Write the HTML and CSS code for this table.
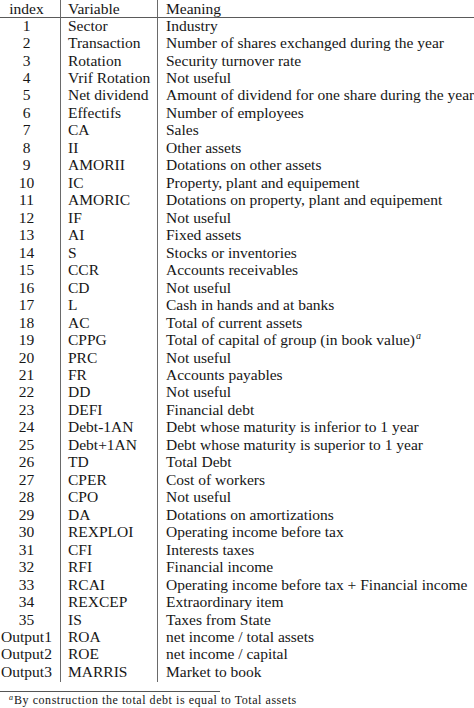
FILE: index.html
```html
<!DOCTYPE html>
<html>
<head>
<meta charset="utf-8">
<link rel="stylesheet" href="styles.css">
</head>
<body>
<div class="page">
<table class="vars">
<thead>
<tr><th class="c1">index</th><th class="c2">Variable</th><th class="c3">Meaning</th></tr>
</thead>
<tbody>
<tr><td class="c1">1</td><td class="c2">Sector</td><td class="c3">Industry</td></tr>
<tr><td class="c1">2</td><td class="c2">Transaction</td><td class="c3">Number of shares exchanged during the year</td></tr>
<tr><td class="c1">3</td><td class="c2">Rotation</td><td class="c3">Security turnover rate</td></tr>
<tr><td class="c1">4</td><td class="c2">Vrif Rotation</td><td class="c3">Not useful</td></tr>
<tr><td class="c1">5</td><td class="c2">Net dividend</td><td class="c3">Amount of dividend for one share during the year</td></tr>
<tr><td class="c1">6</td><td class="c2">Effectifs</td><td class="c3">Number of employees</td></tr>
<tr><td class="c1">7</td><td class="c2">CA</td><td class="c3">Sales</td></tr>
<tr><td class="c1">8</td><td class="c2">II</td><td class="c3">Other assets</td></tr>
<tr><td class="c1">9</td><td class="c2">AMORII</td><td class="c3">Dotations on other assets</td></tr>
<tr><td class="c1">10</td><td class="c2">IC</td><td class="c3">Property, plant and equipement</td></tr>
<tr><td class="c1">11</td><td class="c2">AMORIC</td><td class="c3">Dotations on property, plant and equipement</td></tr>
<tr><td class="c1">12</td><td class="c2">IF</td><td class="c3">Not useful</td></tr>
<tr><td class="c1">13</td><td class="c2">AI</td><td class="c3">Fixed assets</td></tr>
<tr><td class="c1">14</td><td class="c2">S</td><td class="c3">Stocks or inventories</td></tr>
<tr><td class="c1">15</td><td class="c2">CCR</td><td class="c3">Accounts receivables</td></tr>
<tr><td class="c1">16</td><td class="c2">CD</td><td class="c3">Not useful</td></tr>
<tr><td class="c1">17</td><td class="c2">L</td><td class="c3">Cash in hands and at banks</td></tr>
<tr><td class="c1">18</td><td class="c2">AC</td><td class="c3">Total of current assets</td></tr>
<tr><td class="c1">19</td><td class="c2">CPPG</td><td class="c3">Total of capital of group (in book value)<sup class="fn">a</sup></td></tr>
<tr><td class="c1">20</td><td class="c2">PRC</td><td class="c3">Not useful</td></tr>
<tr><td class="c1">21</td><td class="c2">FR</td><td class="c3">Accounts payables</td></tr>
<tr><td class="c1">22</td><td class="c2">DD</td><td class="c3">Not useful</td></tr>
<tr><td class="c1">23</td><td class="c2">DEFI</td><td class="c3">Financial debt</td></tr>
<tr><td class="c1">24</td><td class="c2">Debt-1AN</td><td class="c3">Debt whose maturity is inferior to 1 year</td></tr>
<tr><td class="c1">25</td><td class="c2">Debt+1AN</td><td class="c3">Debt whose maturity is superior to 1 year</td></tr>
<tr><td class="c1">26</td><td class="c2">TD</td><td class="c3">Total Debt</td></tr>
<tr><td class="c1">27</td><td class="c2">CPER</td><td class="c3">Cost of workers</td></tr>
<tr><td class="c1">28</td><td class="c2">CPO</td><td class="c3">Not useful</td></tr>
<tr><td class="c1">29</td><td class="c2">DA</td><td class="c3">Dotations on amortizations</td></tr>
<tr><td class="c1">30</td><td class="c2">REXPLOI</td><td class="c3">Operating income before tax</td></tr>
<tr><td class="c1">31</td><td class="c2">CFI</td><td class="c3">Interests taxes</td></tr>
<tr><td class="c1">32</td><td class="c2">RFI</td><td class="c3">Financial income</td></tr>
<tr><td class="c1">33</td><td class="c2">RCAI</td><td class="c3">Operating income before tax + Financial income</td></tr>
<tr><td class="c1">34</td><td class="c2">REXCEP</td><td class="c3">Extraordinary item</td></tr>
<tr><td class="c1">35</td><td class="c2">IS</td><td class="c3">Taxes from State</td></tr>
<tr><td class="c1">Output1</td><td class="c2">ROA</td><td class="c3">net income / total assets</td></tr>
<tr><td class="c1">Output2</td><td class="c2">ROE</td><td class="c3">net income / capital</td></tr>
<tr class="last"><td class="c1">Output3</td><td class="c2">MARRIS</td><td class="c3">Market to book</td></tr>
</tbody>
</table>
<div class="footnote">
<div class="fn-rule"></div>
<p class="fn-text"><sup class="fn-mark">a</sup>By construction the total debt is equal to Total assets</p>
</div>
</div>
</body>
</html>
```
FILE: styles.css
```css
html, body {
  margin: 0;
  padding: 0;
  background: #ffffff;
}
body {
  font-family: "Liberation Serif", "Times New Roman", serif;
  color: #161616;
  overflow: hidden;
}
.page {
  width: 474px;
  height: 708px;
  overflow: hidden;
}
.vars {
  width: 474px;
  table-layout: fixed;
  border-collapse: separate;
  border-spacing: 0;
  font-size: 15.5px;
  line-height: 16px;
}
.vars th, .vars td {
  padding: 0 0 1.47px 0;
  white-space: nowrap;
  font-weight: normal;
  text-align: left;
  vertical-align: top;
}
.vars th {
  padding-top: 0.6px;
  padding-bottom: 0;
  border-bottom: 1px solid #5a5a5a;
}
.vars .c1 {
  width: 61px;
  text-align: center;
  padding-right: 7px;
  padding-left: 0;
  border-right: 1px solid #6a6a6a;
  box-sizing: border-box;
}
.vars .c2 {
  width: 97px;
  padding-left: 7px;
  border-right: 1px solid #6a6a6a;
  box-sizing: border-box;
}
.vars .c3 {
  padding-left: 8px;
}
.vars .last td {
  padding-bottom: 2.4px;
}
.fn {
  font-size: 10px;
  line-height: 0;
  font-style: italic;
  vertical-align: 6px;
  margin-left: 1px;
}
.footnote {
  padding-top: 9px;
}
.fn-rule {
  width: 220px;
  height: 1px;
  background: #555555;
}
.fn-text {
  margin: 0;
  padding-left: 9px;
  padding-top: 1px;
  font-size: 12px;
  line-height: 15px;
  letter-spacing: 0.55px;
}
.fn-mark {
  font-size: 8px;
  line-height: 0;
  font-style: italic;
  vertical-align: 4px;
  margin-right: 1px;
  letter-spacing: 0;
}
```
